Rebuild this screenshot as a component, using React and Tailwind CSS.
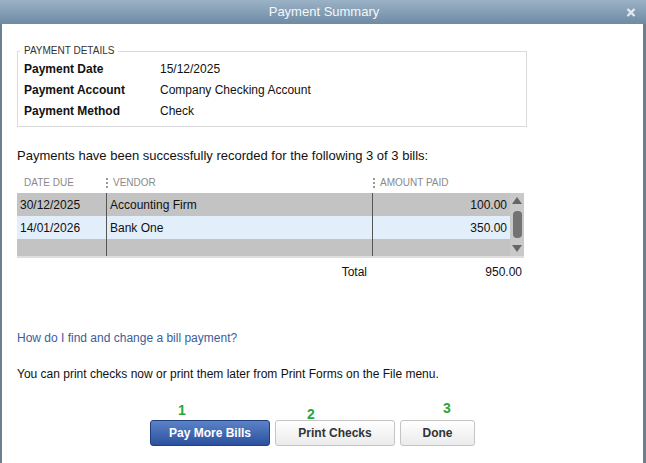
import React from "react";

const rows = [
  { date: "30/12/2025", vendor: "Accounting Firm", amount: "100.00", bg: "bg-[#c3c3c3]" },
  { date: "14/01/2026", vendor: "Bank One", amount: "350.00", bg: "bg-[#e3eefb]" },
];

function Grip() {
  return (
    <span className="flex flex-col gap-[2px] mr-[5px]">
      <span className="w-[2px] h-[2px] bg-[#999]" />
      <span className="w-[2px] h-[2px] bg-[#999]" />
      <span className="w-[2px] h-[2px] bg-[#999]" />
    </span>
  );
}

export default function App() {
  return (
    <div
      className="w-[646px] h-[463px] flex flex-col bg-white text-[12px] text-[#111]"
      style={{ fontFamily: '"Liberation Sans", Arial, sans-serif' }}
    >
      {/* Title bar */}
      <div className="h-[24px] flex items-center justify-center relative bg-gradient-to-b from-[#9bb2c6] to-[#6e8ba3]">
        <span className="text-[13px] text-[#f4f7fa] ml-[2px]">Payment Summary</span>
        <svg className="absolute right-[10px] top-[8px]" width="10" height="9" viewBox="0 0 10 9">
          <path d="M1.5 1 L8.5 8 M8.5 1 L1.5 8" stroke="#e4e9ee" strokeWidth="2.4" />
        </svg>
      </div>

      {/* Body */}
      <div className="flex-1 flex flex-col border-l-2 border-r-[3px] border-[#6e7f8e] pl-[15px]">
        {/* Payment details */}
        <div className="relative mt-[27px] w-[510px] h-[76px] border border-[#dadada] pt-[6px] pl-[6px]">
          <span className="absolute left-[2px] -top-[9px] bg-white px-[4px] text-[10px] text-[#333]">
            PAYMENT DETAILS
          </span>
          {[
            ["Payment Date", "15/12/2025"],
            ["Payment Account", "Company Checking Account"],
            ["Payment Method", "Check"],
          ].map(([k, v]) => (
            <div key={k} className="flex h-[21px] items-center">
              <span className="w-[136px] font-bold">{k}</span>
              <span>{v}</span>
            </div>
          ))}
        </div>

        <div className="mt-[21px] leading-[16px] text-[13px]">
          Payments have been successfully recorded for the following 3 of 3 bills:
        </div>

        {/* Table */}
        <div className="mt-[10px] w-[507px]">
          <div className="h-[19px] flex items-start pt-[1px] text-[10px] text-[#8a8a8a]">
            <span className="w-[89px] pl-[7px]">DATE DUE</span>
            <span className="w-[267px] flex items-center">
              <Grip />
              VENDOR
            </span>
            <span className="flex items-center">
              <Grip />
              AMOUNT PAID
            </span>
          </div>
          <div className="flex border-b-2 border-[#dedede]">
            <div className="flex-1 flex flex-col">
              {rows.map((r) => (
                <div key={r.date} className={`flex h-[23px] items-center ${r.bg}`}>
                  <span className="w-[90px] pl-[3px] h-full flex items-center border-r border-[#555]">
                    {r.date}
                  </span>
                  <span className="w-[266px] pl-[3px] h-full flex items-center border-r border-[#555]">
                    {r.vendor}
                  </span>
                  <span className="flex-1 text-right pr-[3px]">{r.amount}</span>
                </div>
              ))}
              <div className="flex h-[17px] bg-[#c3c3c3]">
                <span className="w-[90px] border-r border-[#555]" />
                <span className="w-[266px] border-r border-[#555]" />
              </div>
            </div>
            {/* Scrollbar */}
            <div className="w-[14px] bg-[#c9c9c9] flex flex-col items-center pt-[4px] pb-[4px] justify-between">
              <svg width="10" height="7" viewBox="0 0 10 7">
                <path d="M5 0 L10 7 L0 7 Z" fill="#666" />
              </svg>
              <div className="w-[9px] h-[27px] rounded-[4px] bg-[#737373]" />
              <svg width="10" height="7" viewBox="0 0 10 7">
                <path d="M0 0 L10 0 L5 7 Z" fill="#666" />
              </svg>
            </div>
          </div>
          <div className="flex h-[26px] items-center pt-[1px]">
            <span className="w-[350px] text-right">Total</span>
            <span className="flex-1 text-right mr-[2px]">950.00</span>
          </div>
        </div>

        <div className="mt-[46px] leading-[16px] text-[#3d5c9a]">
          How do I find and change a bill payment?
        </div>
        <div className="mt-[20px] leading-[16px]">
          You can print checks now or print them later from Print Forms on the File menu.
        </div>

        {/* Buttons */}
        <div className="mt-[38px] ml-[133px] flex gap-[5px] font-bold">
          <button className="relative w-[120px] h-[26px] rounded-[3px] border border-[#1f3f7f] bg-gradient-to-b from-[#5c82c7] to-[#2b519e] text-white">
            <span className="absolute left-[27px] -top-[21px] text-[14px] text-[#2aa53c]">1</span>
            Pay More Bills
          </button>
          <button className="relative w-[120px] h-[26px] rounded-[3px] border border-[#c4c4c4] bg-gradient-to-b from-white to-[#ebebeb] text-[#333]">
            <span className="absolute left-[31px] -top-[17px] text-[14px] text-[#2aa53c]">2</span>
            Print Checks
          </button>
          <button className="relative w-[75px] h-[26px] rounded-[3px] border border-[#c4c4c4] bg-gradient-to-b from-white to-[#ebebeb] text-[#333]">
            <span className="absolute left-[42px] -top-[23px] text-[14px] text-[#2aa53c]">3</span>
            Done
          </button>
        </div>
      </div>
    </div>
  );
}
